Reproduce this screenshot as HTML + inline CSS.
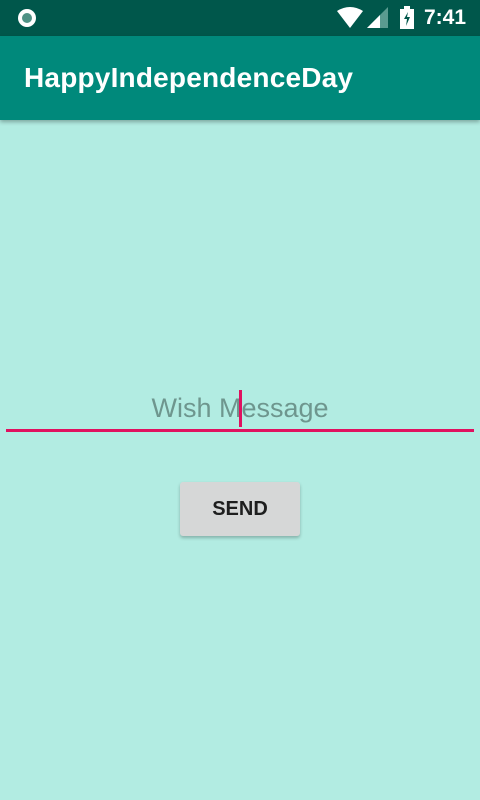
<!DOCTYPE html>
<html><head><meta charset="utf-8"><style>
*{margin:0;padding:0;box-sizing:border-box}
body{width:480px;height:800px;background:#b2ece2;font-family:"Liberation Sans",Roboto,sans-serif;position:relative;overflow:hidden}
.sb{position:absolute;top:0;left:0;width:480px;height:36px;background:#00574b}
.ab{position:absolute;top:36px;left:0;width:480px;height:84px;background:#00897b;box-shadow:0 2px 4px rgba(0,0,0,.3)}
.ab span{position:absolute;left:24px;top:26px;color:#fff;font-size:28px;font-weight:bold;letter-spacing:0.2px}
.time{position:absolute;right:14px;top:6px;color:#fff;font-size:21px;font-weight:bold}
.line{position:absolute;left:6px;top:429px;width:468px;height:3px;background:#e0115f}
.ph{position:absolute;left:0;width:480px;top:393px;text-align:center;color:#6e968e;font-size:27px}
.cur{position:absolute;left:239px;top:390px;width:3px;height:37px;background:#e0115f}
.btn{position:absolute;left:180px;top:482px;width:120px;height:54px;background:#d6d7d7;border-radius:3px;box-shadow:0 2px 3px rgba(0,0,0,.25);color:#1e1e1e;font-size:20px;font-weight:bold;text-align:center;line-height:54px}
</style></head><body>
<div class="sb">
<svg width="480" height="36" style="position:absolute;left:0;top:0">
<circle cx="27" cy="18" r="9" fill="#fff"/><circle cx="27" cy="18" r="5" fill="#4f9285"/>
<path d="M337 11 Q350 3 363 11 L350 28 Z" fill="#fff"/>
<path d="M388 7 L388 28 L367 28 Z" fill="#5a9b90"/>
<path d="M380 15 L380 28 L367 28 Z" fill="#fff"/>
<rect x="400" y="9" width="14" height="20" fill="#fff"/><rect x="404" y="6" width="6" height="3" fill="#fff"/>
<path d="M408 12 L404 19 L407 19 L406 26 L410 17 L407 17 Z" fill="#00574b"/>
</svg>
<span class="time">7:41</span>
</div>
<div class="ab"><span>HappyIndependenceDay</span></div>
<div class="ph">Wish Message</div>
<div class="cur"></div>
<div class="line"></div>
<div class="btn">SEND</div>
</body></html>
